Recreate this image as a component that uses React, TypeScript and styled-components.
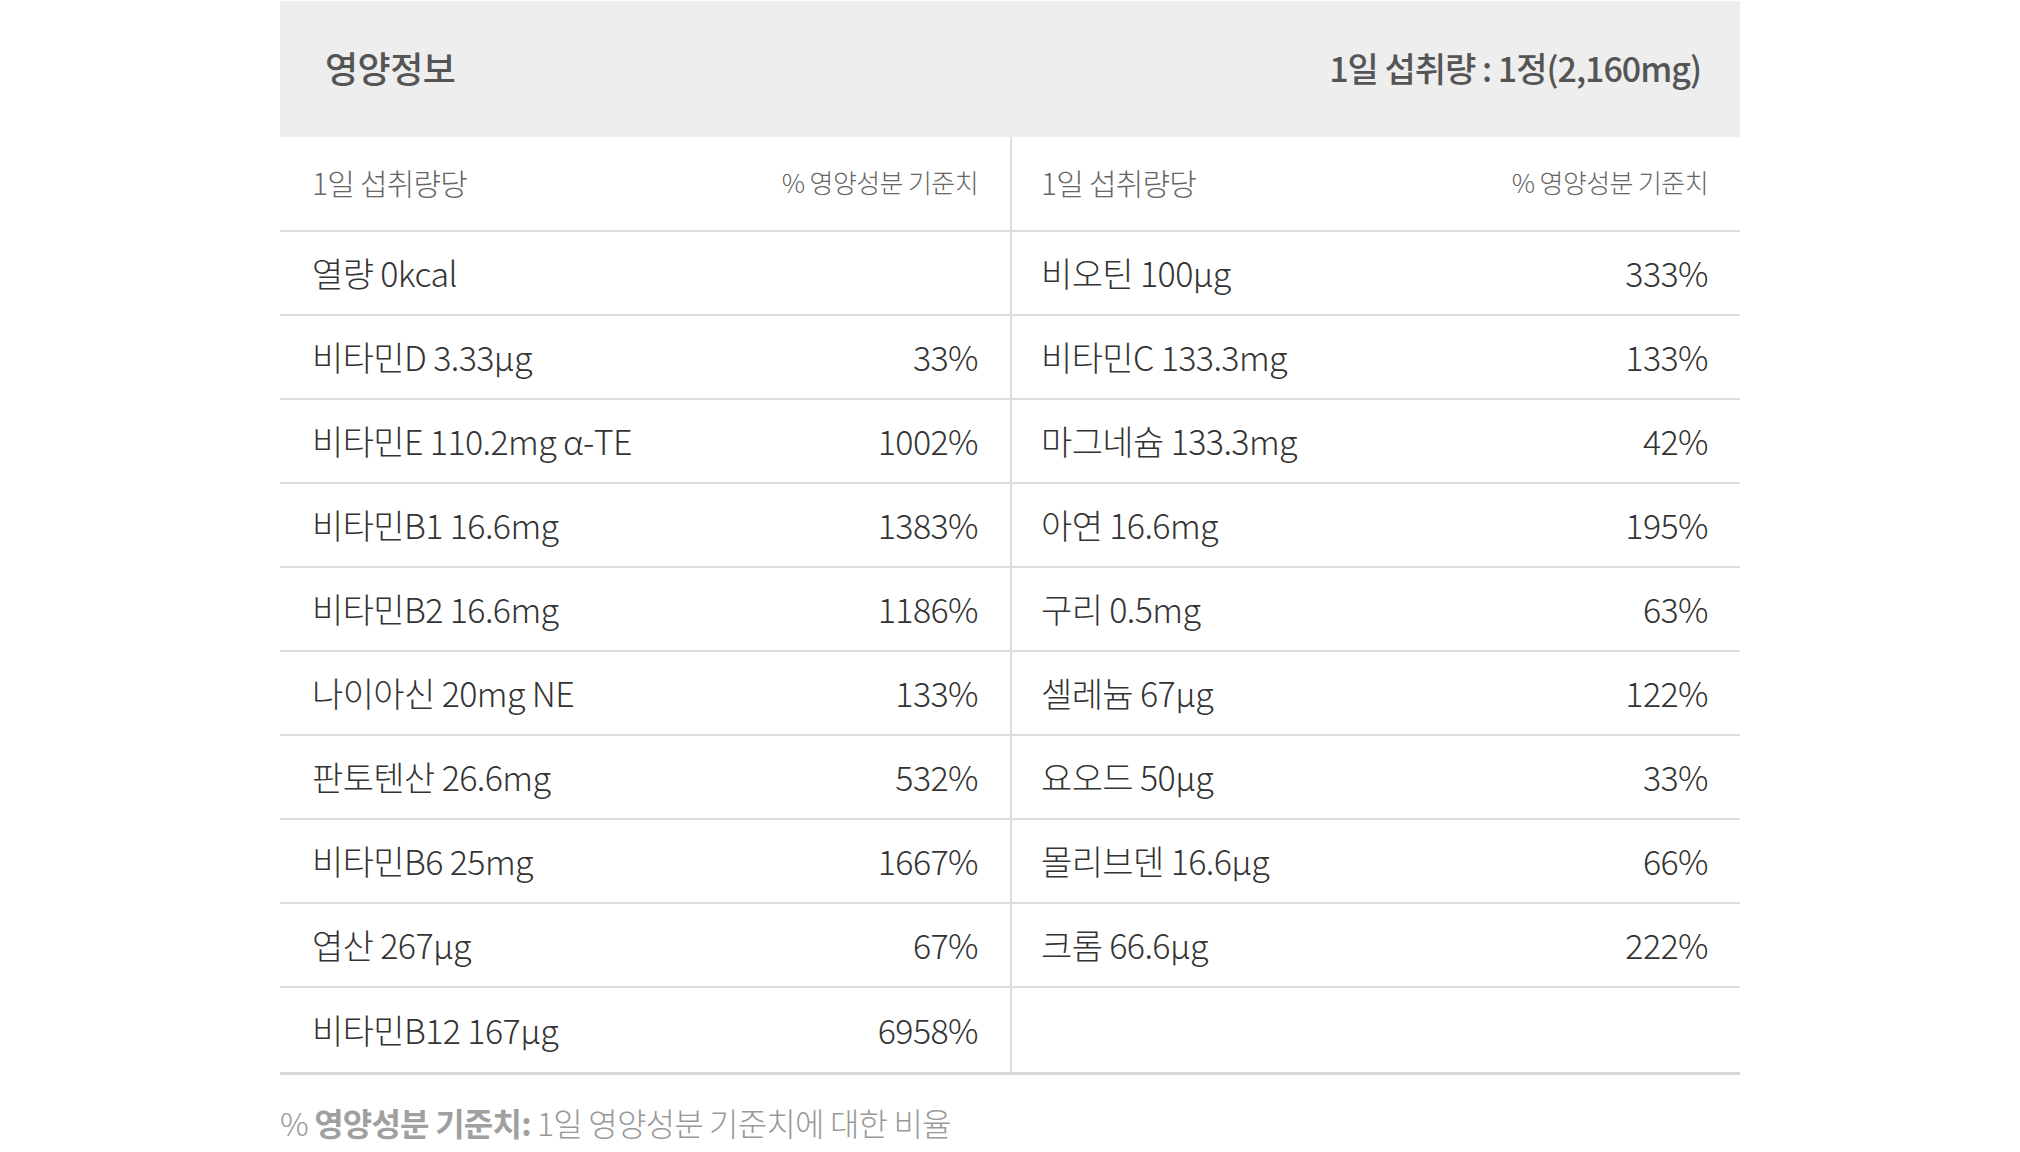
import React from 'react';
import styled, { createGlobalStyle } from 'styled-components';

const GlobalStyle = createGlobalStyle`
  html, body {
    margin: 0;
    padding: 0;
    background: #ffffff;
  }
  body {
    font-family: "Noto Sans CJK KR", "Noto Sans", sans-serif;
    color: #333;
  }
`;

type Item = { name: string; value: string };

const leftItems: Item[] = [
  { name: '열량 0kcal', value: '' },
  { name: '비타민D 3.33μg', value: '33%' },
  { name: '비타민E 110.2mg α-TE', value: '1002%' },
  { name: '비타민B1 16.6mg', value: '1383%' },
  { name: '비타민B2 16.6mg', value: '1186%' },
  { name: '나이아신 20mg NE', value: '133%' },
  { name: '판토텐산 26.6mg', value: '532%' },
  { name: '비타민B6 25mg', value: '1667%' },
  { name: '엽산 267μg', value: '67%' },
  { name: '비타민B12 167μg', value: '6958%' },
];

const rightItems: Item[] = [
  { name: '비오틴 100μg', value: '333%' },
  { name: '비타민C 133.3mg', value: '133%' },
  { name: '마그네슘 133.3mg', value: '42%' },
  { name: '아연 16.6mg', value: '195%' },
  { name: '구리 0.5mg', value: '63%' },
  { name: '셀레늄 67μg', value: '122%' },
  { name: '요오드 50μg', value: '33%' },
  { name: '몰리브덴 16.6μg', value: '66%' },
  { name: '크롬 66.6μg', value: '222%' },
  { name: '', value: '' },
];

const Wrapper = styled.div`
  width: 1460px;
  margin: 0 auto;
  padding-top: 1px;
`;

const Header = styled.div`
  height: 136px;
  background: #eeeeee;
  display: flex;
  align-items: center;
  justify-content: space-between;
  padding: 0 39px 4px 45px;
  box-sizing: border-box;
  color: #555;
`;

const Title = styled.h2`
  margin: 0;
  font-size: 36px;
  font-weight: 500;
  letter-spacing: -0.5px;
`;

const Serving = styled.span`
  font-size: 34px;
  font-weight: 500;
  letter-spacing: -1px;
`;

const Table = styled.div`
  display: grid;
  grid-template-columns: 1fr 1fr;
  border-bottom: 3px solid #d8d8d8;
`;

const Column = styled.div<{ divided?: boolean }>`
  display: flex;
  flex-direction: column;
  border-left: ${(p) => (p.divided ? '2px solid #dddddd' : 'none')};
`;

const SubHead = styled.div<{ divided?: boolean }>`
  height: 95px;
  display: flex;
  align-items: center;
  justify-content: space-between;
  padding: 0 32px 4px ${(p) => (p.divided ? '29px' : '32px')};
  border-bottom: 2px solid #dddddd;
  box-sizing: border-box;
  color: #666;
`;

const SubLabel = styled.span`
  font-size: 30px;
  font-weight: 300;
  letter-spacing: -0.8px;
`;

const SubNote = styled.span`
  font-size: 26px;
  font-weight: 300;
  letter-spacing: -0.6px;
`;

const Row = styled.div<{ divided?: boolean; last?: boolean }>`
  height: 84px;
  display: flex;
  align-items: center;
  justify-content: space-between;
  padding: 0 32px 2px ${(p) => (p.divided ? '29px' : '32px')};
  border-bottom: ${(p) => (p.last ? 'none' : '2px solid #dddddd')};
  box-sizing: border-box;
  font-size: 34px;
  font-weight: 300;
  letter-spacing: -0.6px;
  color: #333;
`;

const Footer = styled.p`
  margin: 24px 0 0;
  font-size: 32px;
  font-weight: 300;
  letter-spacing: -0.8px;
  color: #999;

  strong {
    font-weight: 700;
    color: #a0a0a0;
  }
`;

const NutritionColumn: React.FC<{ items: Item[]; divided?: boolean }> = ({ items, divided }) => (
  <Column divided={divided}>
    <SubHead divided={divided}>
      <SubLabel>1일 섭취량당</SubLabel>
      <SubNote>% 영양성분 기준치</SubNote>
    </SubHead>
    {items.map((item, i) => (
      <Row key={i} divided={divided} last={i === items.length - 1}>
        <span>{item.name}</span>
        <span>{item.value}</span>
      </Row>
    ))}
  </Column>
);

export default function App() {
  return (
    <>
      <GlobalStyle />
      <Wrapper>
        <Header>
          <Title>영양정보</Title>
          <Serving>1일 섭취량 : 1정(2,160mg)</Serving>
        </Header>
        <Table>
          <NutritionColumn items={leftItems} />
          <NutritionColumn items={rightItems} divided />
        </Table>
        <Footer>
          % <strong>영양성분 기준치:</strong> 1일 영양성분 기준치에 대한 비율
        </Footer>
      </Wrapper>
    </>
  );
}
